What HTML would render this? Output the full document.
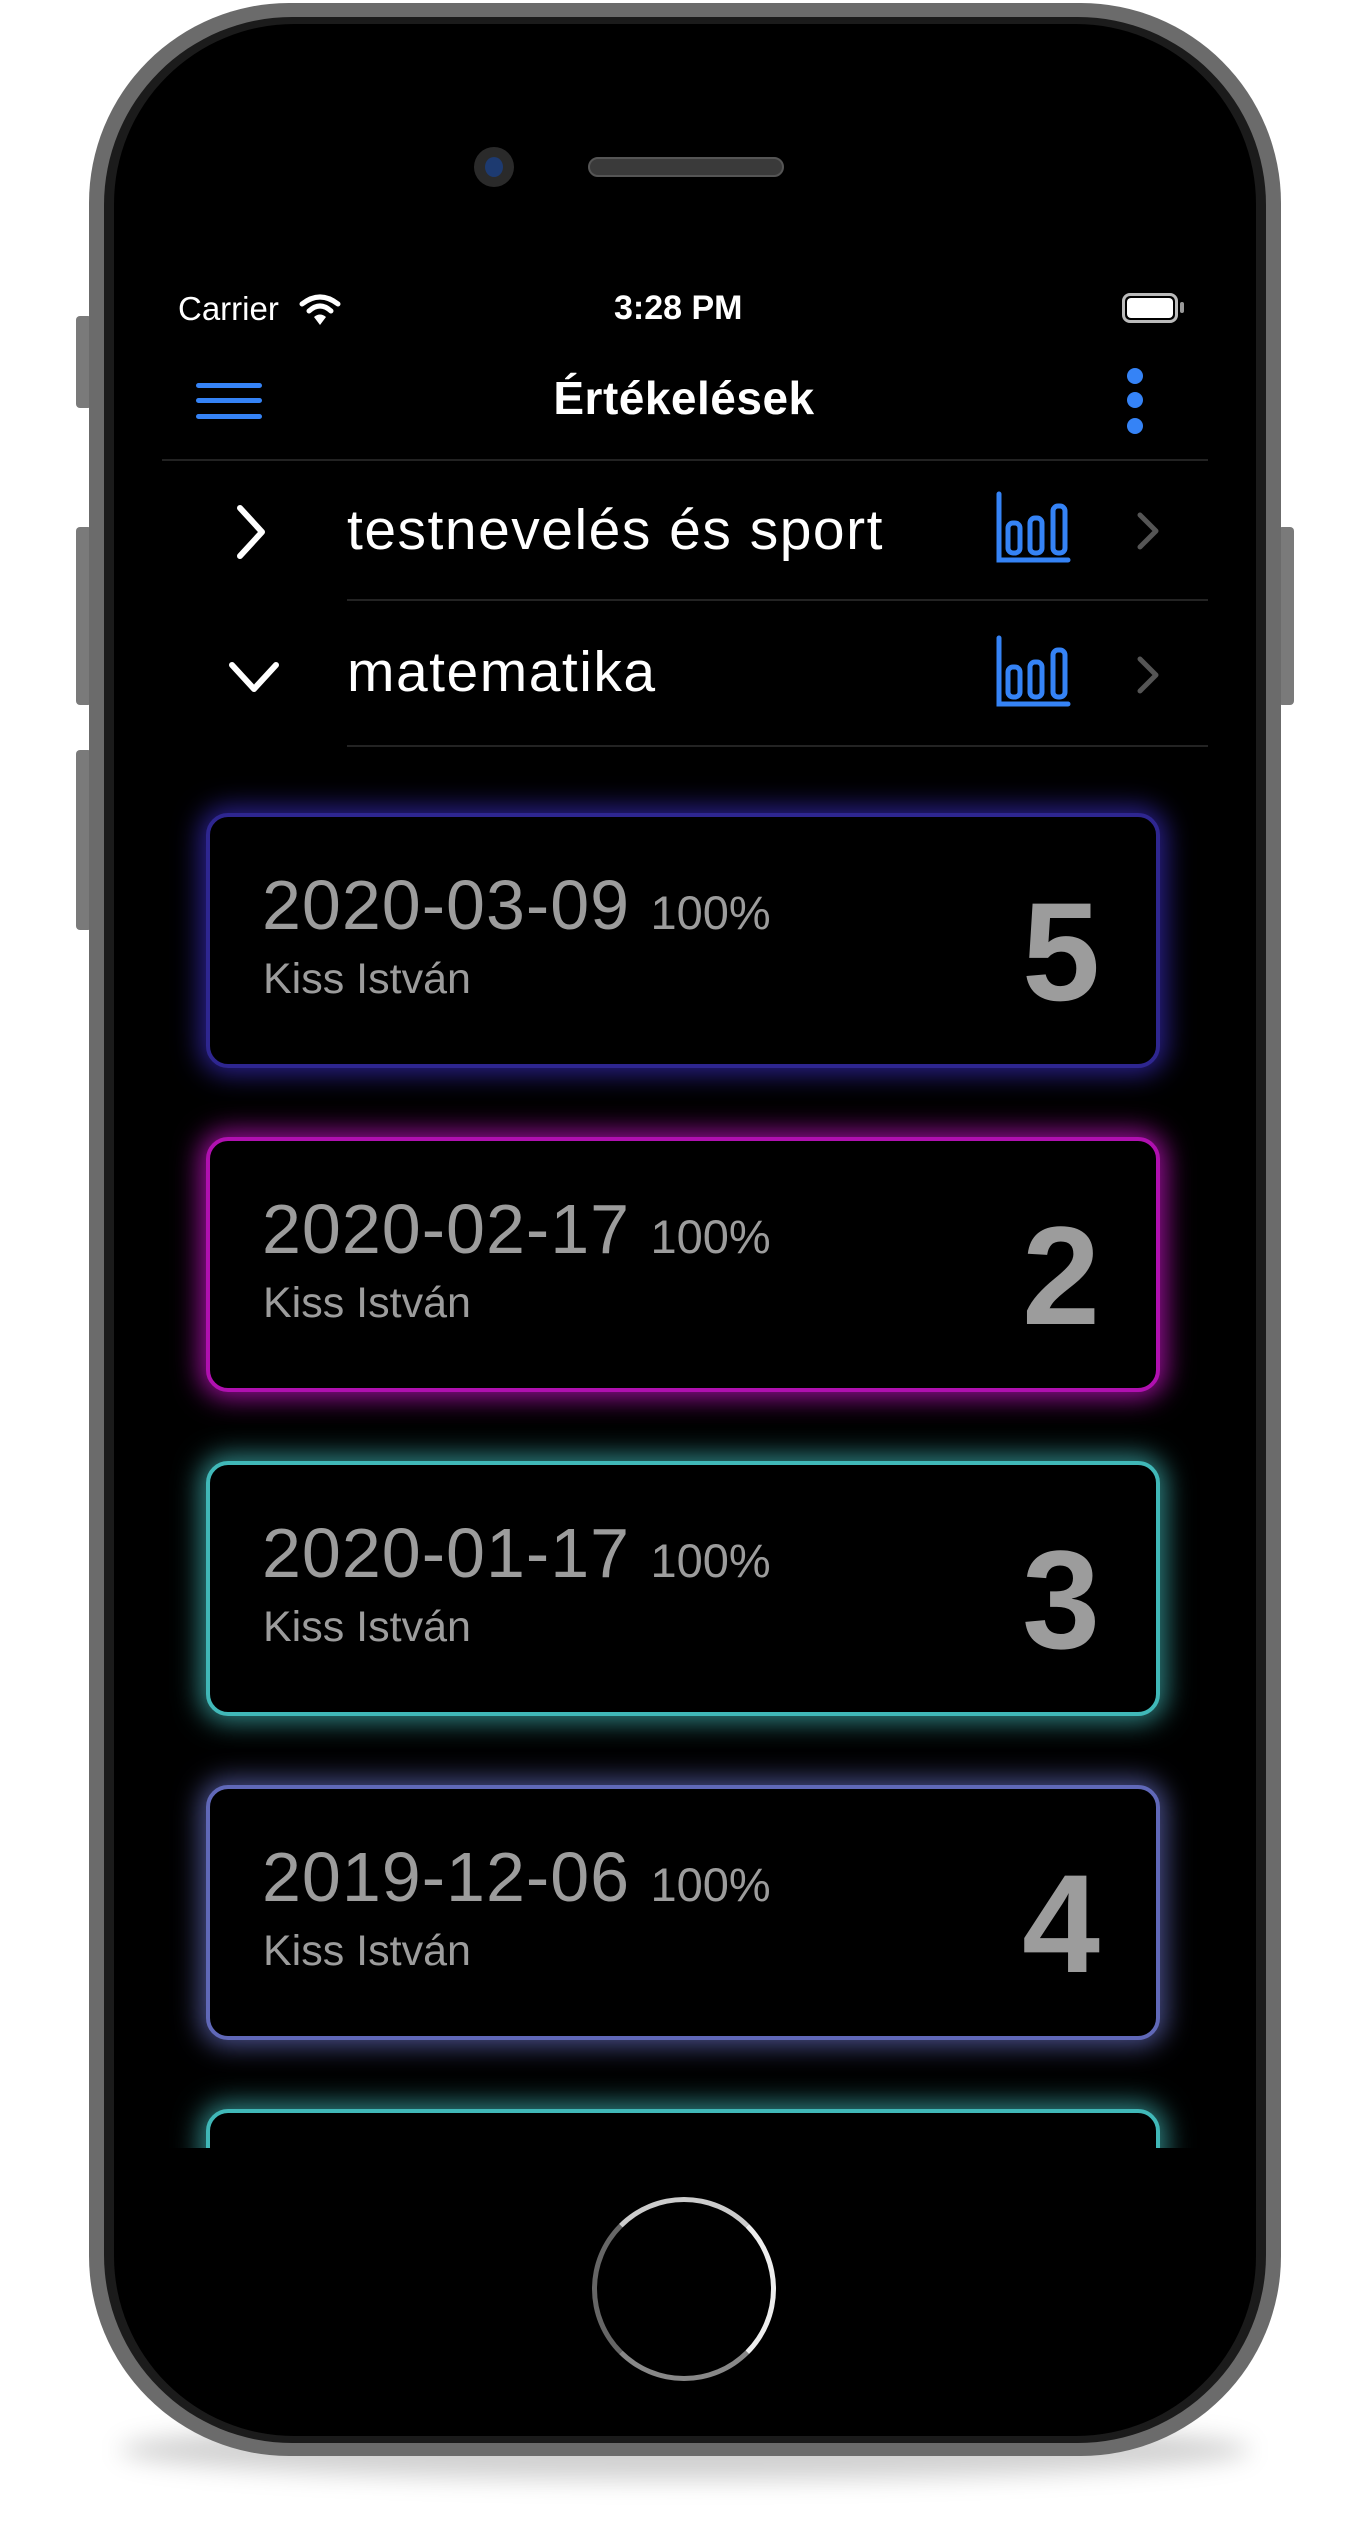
<!DOCTYPE html>
<html><head><meta charset="utf-8"><style>
html,body{margin:0;padding:0;background:#fff;width:1370px;height:2534px;overflow:hidden;font-family:"Liberation Sans",sans-serif}
.abs{position:absolute}
.card{position:absolute;left:206px;width:954px;height:255px;border-radius:22px;background:#000;box-sizing:border-box;border:4px solid}
.date{position:absolute;left:52px;top:48px;color:#9c9c9c;font-size:70px;letter-spacing:1px;white-space:nowrap}
.date span{font-size:47px;letter-spacing:0}
.name{position:absolute;left:53px;top:138px;color:#9c9c9c;font-size:43px}
.grade{position:absolute;right:56px;top:54px;color:#9c9c9c;font-size:140px;font-weight:bold}
</style></head><body>
<div class="abs" style="left:120px;top:2420px;width:1130px;height:60px;border-radius:50%;background:rgba(0,0,0,0.18);filter:blur(12px)"></div>
<div class="abs" style="left:76px;top:316px;width:16px;height:92px;background:#7a7a7a;border-radius:4px"></div>
<div class="abs" style="left:76px;top:527px;width:16px;height:178px;background:#7a7a7a;border-radius:4px"></div>
<div class="abs" style="left:76px;top:750px;width:16px;height:180px;background:#7a7a7a;border-radius:4px"></div>
<div class="abs" style="left:1278px;top:527px;width:16px;height:178px;background:#7a7a7a;border-radius:4px"></div>
<div class="abs" style="left:89px;top:3px;width:1192px;height:2453px;border-radius:200px;background:#6b6b6b"></div>
<div class="abs" style="left:104px;top:17px;width:1162px;height:2426px;border-radius:188px;background:#1b1b1b"></div>
<div class="abs" style="left:114px;top:24px;width:1142px;height:2412px;border-radius:180px;background:#000"></div>
<div class="abs" style="left:474px;top:147px;width:40px;height:40px;border-radius:50%;background:#2a2a2a"></div>
<div class="abs" style="left:485px;top:157px;width:18px;height:20px;border-radius:50%;background:#1d3a70"></div>
<div class="abs" style="left:588px;top:157px;width:196px;height:20px;border-radius:10px;background:#3a3a3a;border:2px solid #555;box-sizing:border-box"></div>
<div class="abs" style="left:178px;top:290px;color:#fff;font-size:33px">Carrier</div>
<svg class="abs" style="left:298px;top:292px" width="44" height="36" viewBox="0 0 44 36"><path d="M4 12 Q22 -2 40 12" stroke="#fff" stroke-width="5" fill="none" stroke-linecap="round"/><path d="M11 19 Q22 9 33 19" stroke="#fff" stroke-width="5" fill="none" stroke-linecap="round"/><path d="M16 25 L22 33 L28 25 Q22 20 16 25Z" fill="#fff"/></svg>
<div class="abs" style="left:614px;top:289px;color:#fff;font-size:34px;font-weight:bold">3:28 PM</div>
<div class="abs" style="left:1122px;top:293px;width:56px;height:30px;border:3px solid #bbb;border-radius:8px;box-sizing:border-box"></div>
<div class="abs" style="left:1127px;top:298px;width:46px;height:20px;background:#fff;border-radius:4px"></div>
<div class="abs" style="left:1180px;top:302px;width:4px;height:11px;background:#999;border-radius:2px"></div>
<div class="abs" style="left:196px;top:383px;width:66px;height:5px;background:#3583f6;border-radius:3px"></div>
<div class="abs" style="left:196px;top:398px;width:66px;height:5px;background:#3583f6;border-radius:3px"></div>
<div class="abs" style="left:196px;top:414px;width:66px;height:5px;background:#3583f6;border-radius:3px"></div>
<div class="abs" style="left:434px;top:371px;width:500px;text-align:center;color:#fff;font-size:46px;font-weight:bold;letter-spacing:0.5px">Értékelések</div>
<div class="abs" style="left:1127px;top:368px;width:16px;height:16px;border-radius:50%;background:#3583f6"></div>
<div class="abs" style="left:1127px;top:392px;width:16px;height:16px;border-radius:50%;background:#3583f6"></div>
<div class="abs" style="left:1127px;top:418px;width:16px;height:16px;border-radius:50%;background:#3583f6"></div>
<div class="abs" style="left:162px;top:459px;width:1046px;height:2px;background:#222"></div>
<svg class="abs" style="left:230px;top:502px" width="44" height="60"><path d="M10 6 L32 30 L10 54" stroke="#fff" stroke-width="6" fill="none" stroke-linecap="round" stroke-linejoin="round"/></svg>
<div class="abs" style="left:347px;top:497px;color:#fff;font-size:57px;letter-spacing:1.5px">testnevelés és sport</div>
<div class="abs" style="left:347px;top:599px;width:861px;height:2px;background:#232323"></div>
<svg class="abs" style="left:226px;top:655px" width="60" height="44"><path d="M6 10 L28 34 L50 10" stroke="#fff" stroke-width="6" fill="none" stroke-linecap="round" stroke-linejoin="round"/></svg>
<div class="abs" style="left:347px;top:639px;color:#fff;font-size:57px;letter-spacing:1.5px">matematika</div>
<div class="abs" style="left:347px;top:745px;width:861px;height:2px;background:#232323"></div>
<svg class="abs" style="left:990px;top:488px" width="200" height="80" viewBox="0 0 200 80"><g stroke="#3583f6" stroke-width="5" fill="none" stroke-linecap="round"><path d="M9 6 V72 H78"/><rect x="18" y="35" width="12" height="30" rx="5"/><rect x="40" y="30" width="12" height="35" rx="5"/><rect x="63" y="18" width="12" height="47" rx="5"/></g><path d="M150 27 L166 43 L150 59" stroke="#555" stroke-width="5" fill="none" stroke-linecap="round" stroke-linejoin="round"/></svg>
<svg class="abs" style="left:990px;top:632px" width="200" height="80" viewBox="0 0 200 80"><g stroke="#3583f6" stroke-width="5" fill="none" stroke-linecap="round"><path d="M9 6 V72 H78"/><rect x="18" y="35" width="12" height="30" rx="5"/><rect x="40" y="30" width="12" height="35" rx="5"/><rect x="63" y="18" width="12" height="47" rx="5"/></g><path d="M150 27 L166 43 L150 59" stroke="#555" stroke-width="5" fill="none" stroke-linecap="round" stroke-linejoin="round"/></svg>
<div class="abs" style="left:118px;top:770px;width:1134px;height:1378px;overflow:hidden">
<div class="card" style="left:88px;top:43px;border-color:#2e2690;box-shadow:0 0 26px 6px rgba(60,45,200,0.7)"><div class="date">2020-03-09 <span>100%</span></div><div class="name">Kiss István</div><div class="grade">5</div></div>
<div class="card" style="left:88px;top:367px;border-color:#b010b0;box-shadow:0 0 26px 6px rgba(200,20,200,0.75)"><div class="date">2020-02-17 <span>100%</span></div><div class="name">Kiss István</div><div class="grade">2</div></div>
<div class="card" style="left:88px;top:691px;border-color:#40b8b8;box-shadow:0 0 26px 6px rgba(70,200,200,0.65)"><div class="date">2020-01-17 <span>100%</span></div><div class="name">Kiss István</div><div class="grade">3</div></div>
<div class="card" style="left:88px;top:1015px;border-color:#6068b8;box-shadow:0 0 26px 6px rgba(110,120,210,0.65)"><div class="date">2019-12-06 <span>100%</span></div><div class="name">Kiss István</div><div class="grade">4</div></div>
<div class="card" style="left:88px;top:1339px;border-color:#40b8b8;box-shadow:0 0 26px 6px rgba(70,200,200,0.65)"></div>
</div>
<div class="abs" style="left:592px;top:2197px;width:184px;height:184px;border-radius:50%;box-sizing:border-box;border:5px solid #aaa;border-top-color:#ccc;border-right-color:#eee;border-left-color:#666;border-bottom-color:#888"></div>
</body></html>
